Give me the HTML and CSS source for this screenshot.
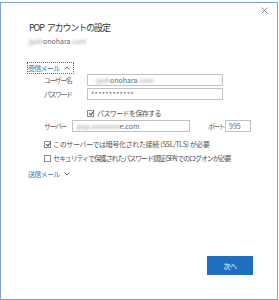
FILE: index.html
```html
<!DOCTYPE html>
<html lang="ja">
<head>
<meta charset="utf-8">
<link rel="stylesheet" href="styles.css">
</head>
<body>
<div class="window">
  <svg class="close" width="7" height="7" viewBox="0 0 7 7"><path d="M0.5 0.5 L6.5 6.5 M6.5 0.5 L0.5 6.5" stroke="#8a8a8a" stroke-width="1" fill="none"/></svg>
  <div class="content">
    <div class="title">POP アカウントの設定</div>
    <div class="email"><span class="blur">jyoh</span>onohara<span class="blur">.com</span></div>

    <div class="section open"><span class="sec-label">受信メール</span><svg class="chev" width="6" height="4" viewBox="0 0 6 4"><path d="M0.5 3.5 L3 1 L5.5 3.5" stroke="#666" stroke-width="0.9" fill="none"/></svg></div>

    <div class="fields">
      <div class="row r-user">
        <span class="label">ユーザー名</span>
        <div class="input wide"><span class="blur">jyoh</span>onohara<span class="blur">.com</span></div>
      </div>
      <div class="row r-pass">
        <span class="label">パスワード</span>
        <div class="input wide pw">************</div>
      </div>
      <div class="row r-save">
        <span class="cb checked"></span><span class="cbtext t-save">パスワードを保存する</span>
      </div>
      <div class="row r-server">
        <span class="label short">サーバー</span>
        <div class="input server"><span class="blur">pop.xxxxxxxx</span>e.com</div>
        <span class="label port">ポート</span>
        <div class="input portbox">995</div>
      </div>
      <div class="row r-ssl">
        <span class="cb checked"></span><span class="cbtext t-ssl">このサーバーでは暗号化された接続 (SSL/TLS) が必要</span>
      </div>
      <div class="row r-spa">
        <span class="cb"></span><span class="cbtext t-spa">セキュリティで保護されたパスワード認証 (SPA) でのログオンが必要</span>
      </div>
    </div>

    <div class="section send"><span class="sec-label">送信メール</span><svg class="chev" width="6" height="4" viewBox="0 0 6 4"><path d="M0.5 0.5 L3 3 L5.5 0.5" stroke="#666" stroke-width="0.9" fill="none"/></svg></div>
  </div>
  <div class="footer">
    <button class="next">次へ</button>
  </div>
</div>
</body>
</html>
```

FILE: styles.css
```css
* { box-sizing: border-box; }
html, body { margin: 0; padding: 0; background: #fff; }
body {
  font-family: "Noto Sans CJK JP", "Liberation Sans", sans-serif;
  color: #555;
  padding-top: 2px;
}
.window {
  position: relative;
  width: 278px;
  height: 298px;
  border: 1px solid #7ba3cf;
  background: #fff;
  display: flex;
  flex-direction: column;
}
.close {
  position: absolute;
  top: 4px;
  right: 9px;
}
.content {
  padding: 18px 0 0 27px;
  flex: 1;
  font-size: 7px;
  line-height: 10px;
}
.title {
  font-size: 9px;
  line-height: 14px;
  color: #333;
  margin-left: 1px;
  letter-spacing: -1.1px;
  word-spacing: 2px;
}
.email {
  font-size: 7px;
  line-height: 10px;
  color: #666;
  margin: 1px 0 0 1px;
}
.blur { filter: blur(1.2px); color: #999; }
.section {
  display: flex;
  width: max-content;
  align-items: center;
  height: 10px;
  font-size: 7px;
  line-height: 10px;
  color: #3a76c0;
  gap: 4px;
}
.sec-label { letter-spacing: -0.7px; }
.section.open {
  margin-top: 17px;
  outline: 1px dotted #666;
  padding: 0 3px 0 0;
}
.fields {
  padding-left: 16px;
}
.row {
  display: flex;
  align-items: center;
  font-size: 7px;
  line-height: 10px;
}
.label {
  flex: none;
  width: 43px;
  color: #666;
  letter-spacing: -1.5px;
  white-space: nowrap;
}
.label.short { width: 28px; }
.label.port { width: 17px; margin-left: 18px; letter-spacing: -1.8px; }
.input {
  flex: none;
  height: 12px;
  border: 1px solid #c2c2c2;
  font-size: 7px;
  line-height: 10px;
  padding-left: 8px;
  color: #666;
  white-space: nowrap;
  overflow: hidden;
}
.input.wide { width: 136px; }
.input.pw { padding-left: 3px; letter-spacing: 0.3px; }
.input.server { width: 118px; padding-left: 4px; }
.input.portbox { width: 26px; padding-left: 3px; }
.r-user { margin-top: 1px; }
.r-pass { margin-top: 2px; }
.r-save { margin-top: 8px; padding-left: 43px; height: 10px; }
.r-server { margin-top: 2px; }
.r-ssl { margin-top: 7px; height: 10px; }
.r-spa { margin-top: 4px; height: 10px; }
.cb {
  width: 7px;
  height: 7px;
  border: 1px solid #8c8c8c;
  margin-right: 3px;
  position: relative;
  flex: none;
}
.r-ssl .cb, .r-spa .cb { margin-right: 2px; }
.cb.checked::after {
  content: "";
  position: absolute;
  left: 1.5px;
  top: -0.5px;
  width: 2px;
  height: 4px;
  border: solid #555;
  border-width: 0 1px 1px 0;
  transform: rotate(40deg);
}
.cbtext { color: #555; white-space: nowrap; }
.t-save { letter-spacing: -0.6px; }
.t-ssl { letter-spacing: -0.35px; }
.t-spa { letter-spacing: -1.1px; }
.section.send { margin-top: 6px; }
.footer {
  display: flex;
  justify-content: flex-end;
  padding: 0 24px 24px 0;
}
.next {
  width: 46px;
  height: 19px;
  background: #1f6fc1;
  border: none;
  color: #fff;
  font-family: "Noto Sans CJK JP", sans-serif;
  font-size: 7px;
  letter-spacing: -0.5px;
  padding: 0;
}
```
